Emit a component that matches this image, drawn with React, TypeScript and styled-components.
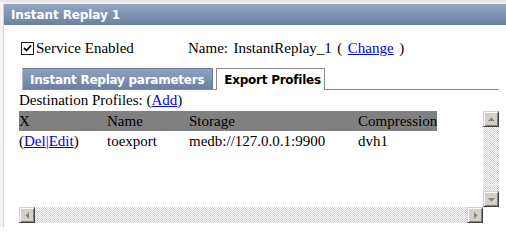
import React from "react";
import styled, { createGlobalStyle } from "styled-components";

const Global = createGlobalStyle`
  html, body { margin: 0; padding: 0; background: #ffffff; }
  body { width: 506px; height: 227px; overflow: hidden; }
`;

const Frame = styled.div`
  width: 506px;
  height: 227px;
  box-sizing: border-box;
  padding: 4px 0 0 3px;
  background: linear-gradient(#e4e4e4, #f4f4f4 4px, #f2f2f2);
`;

const Panel = styled.div`
  height: 100%;
  box-sizing: border-box;
  border-left: 1px solid #d2d2d2;
  background: #ffffff;
  display: flex;
  flex-direction: column;
`;

const TitleBar = styled.div`
  height: 21px;
  display: flex;
  align-items: center;
  padding-left: 7px;
  background: linear-gradient(#93a7c3, #6b81a2);
  color: #ffffff;
  font: bold 12px "DejaVu Sans", Verdana, sans-serif;
  letter-spacing: -0.1px;
`;

const Content = styled.div`
  padding: 13px 7px 0 15px;
  font: 15px "Liberation Serif", "Times New Roman", serif;
  color: #000000;
`;

const ServiceRow = styled.div`
  display: flex;
  align-items: center;
  height: 20px;
  line-height: 20px;
`;

const CheckGroup = styled.label`
  display: flex;
  align-items: center;
  width: 167px;
  padding-left: 2px;
`;

const CheckBox = styled.span`
  width: 11px;
  height: 11px;
  border: 1px solid #1c1c1c;
  background: #ffffff;
  margin-right: 2px;
  display: flex;
  align-items: center;
  justify-content: center;
`;

const NameLine = styled.span`
  word-spacing: -1px;
`;

const Link = styled.a`
  color: #0000ee;
  text-decoration: underline;
  cursor: pointer;
`;

const Tabs = styled.div`
  display: flex;
  align-items: flex-end;
  gap: 3px;
  margin: 9px 0 0 3px;
  border-bottom: 1px solid #8a8a8a;
  height: 22px;
`;

const Tab = styled.div<{ $active?: boolean }>`
  height: ${(p) => (p.$active ? "22px" : "21px")};
  box-sizing: border-box;
  display: flex;
  align-items: center;
  font: bold 12px "DejaVu Sans", Verdana, sans-serif;
  letter-spacing: -0.25px;
  padding: ${(p) => (p.$active ? "1px 3px 0 7px" : "1px 8px 0 7px")};
  margin-bottom: ${(p) => (p.$active ? "-1px" : "0")};
  color: ${(p) => (p.$active ? "#000000" : "#ffffff")};
  background: ${(p) =>
    p.$active ? "#ffffff" : "linear-gradient(#8fa3c0, #6a80a1)"};
  border: 1px solid ${(p) => (p.$active ? "#8a8a8a" : "#6a7e9c")};
  border-left-color: ${(p) => (p.$active ? "#8a8a8a" : "#a9b8cd")};
  border-bottom: none;
`;

const DestLine = styled.div`
  height: 18px;
  line-height: 18px;
  margin-top: 1px;
`;

const ScrollBox = styled.div`
  margin-top: 2px;
  width: 480px;
  display: grid;
  grid-template-columns: 464px 16px;
  grid-template-rows: 96px 16px;
`;

const Viewport = styled.div`
  overflow: hidden;
`;

const Table = styled.table`
  border-collapse: collapse;
  font: 15px "Liberation Serif", "Times New Roman", serif;
  width: 418px;
  table-layout: fixed;
`;

const HeadRow = styled.tr`
  background: #808080;
`;

const Cell = styled.td<{ $w?: number }>`
  padding: 0;
  height: 20px;
  line-height: 20px;
  white-space: nowrap;
  vertical-align: middle;
  width: ${(p) => (p.$w ? `${p.$w}px` : "auto")};
`;

const Track = styled.div<{ $vertical?: boolean }>`
  display: flex;
  flex-direction: ${(p) => (p.$vertical ? "column" : "row")};
  justify-content: space-between;
  background: repeating-conic-gradient(#d4d0c8 0 25%, #ffffff 0 50%) 0 0 / 2px 2px;
`;

const ScrollButton = styled.div`
  width: 16px;
  height: 16px;
  box-sizing: border-box;
  background: #d4d0c8;
  border: 1px solid;
  border-color: #d4d0c8 #404040 #404040 #d4d0c8;
  box-shadow: inset 1px 1px 0 #ffffff, inset -1px -1px 0 #808080;
  display: flex;
  align-items: center;
  justify-content: center;
`;

const Corner = styled.div`
  background: #ffffff;
`;

type Dir = "up" | "down" | "left" | "right";

const Arrow: React.FC<{ dir: Dir }> = ({ dir }) => {
  const pts: Record<Dir, string> = {
    up: "1,5 8,5 4.5,1.5",
    down: "1,2 8,2 4.5,5.5",
    left: "5,1 5,8 1.5,4.5",
    right: "2,1 2,8 5.5,4.5",
  };
  const horizontal = dir === "left" || dir === "right";
  return (
    <svg
      width={horizontal ? 7 : 9}
      height={horizontal ? 9 : 7}
      viewBox={horizontal ? "0 0 7 9" : "0 0 9 7"}
    >
      <polygon points={pts[dir]} fill="#808080" />
    </svg>
  );
};

export default function App() {
  return (
    <>
      <Global />
      <Frame>
        <Panel>
          <TitleBar>Instant Replay 1</TitleBar>
          <Content>
            <ServiceRow>
              <CheckGroup>
                <CheckBox>
                  <svg width="9" height="9" viewBox="0 0 9 9">
                    <path d="M1 4 L3.5 6.5 L8 1.5" stroke="#000" strokeWidth="1.8" fill="none" />
                  </svg>
                </CheckBox>
                Service Enabled
              </CheckGroup>
              <NameLine>
                Name:&nbsp; InstantReplay_1 &nbsp;(&nbsp; <Link>Change</Link> &nbsp;)
              </NameLine>
            </ServiceRow>
            <Tabs>
              <Tab>Instant Replay parameters</Tab>
              <Tab $active>Export Profiles</Tab>
            </Tabs>
            <DestLine>
              Destination Profiles: (<Link>Add</Link>)
            </DestLine>
            <ScrollBox>
              <Viewport>
                <Table>
                  <tbody>
                    <HeadRow>
                      <Cell $w={88}>X</Cell>
                      <Cell $w={82}>Name</Cell>
                      <Cell $w={169}>Storage</Cell>
                      <Cell $w={79}>Compression</Cell>
                    </HeadRow>
                    <tr>
                      <Cell>
                        (<Link>Del</Link>
                        <Link>|</Link>
                        <Link>Edit</Link>)
                      </Cell>
                      <Cell>toexport</Cell>
                      <Cell>medb://127.0.0.1:9900</Cell>
                      <Cell>dvh1</Cell>
                    </tr>
                  </tbody>
                </Table>
              </Viewport>
              <Track $vertical>
                <ScrollButton>
                  <Arrow dir="up" />
                </ScrollButton>
                <ScrollButton>
                  <Arrow dir="down" />
                </ScrollButton>
              </Track>
              <Track>
                <ScrollButton>
                  <Arrow dir="left" />
                </ScrollButton>
                <ScrollButton>
                  <Arrow dir="right" />
                </ScrollButton>
              </Track>
              <Corner />
            </ScrollBox>
          </Content>
        </Panel>
      </Frame>
    </>
  );
}
